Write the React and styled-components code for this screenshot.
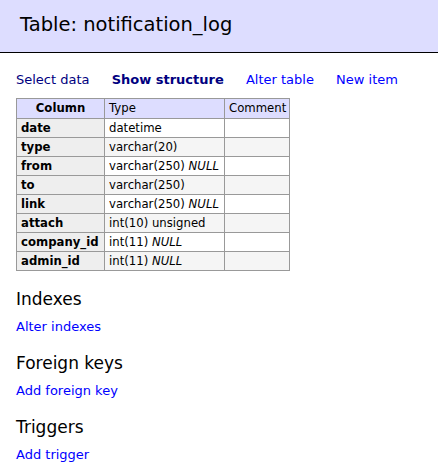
import React from "react";
import styled, { createGlobalStyle } from "styled-components";

const GlobalStyle = createGlobalStyle`
  html, body {
    margin: 0;
    padding: 0;
    background: #fff;
  }
  body {
    font-family: "DejaVu Sans", Verdana, sans-serif;
    font-size: 13px;
    line-height: 16px;
    color: #000;
  }
`;

const Page = styled.div`
  min-height: 473px;
`;

const Title = styled.h2`
  margin: 0;
  padding: 13px 20px 15px;
  font-size: 19.5px;
  line-height: 24px;
  font-weight: normal;
  color: #000;
  background: #ddf;
  border-bottom: 1px solid #000;
`;

const Content = styled.div`
  padding: 0 16px 10px;
`;

const Links = styled.p`
  margin: 19px 0 0;
  white-space: nowrap;
`;

const Link = styled.a`
  color: ${(p) => (p.$visited ? "#000080" : "#0000ff")};
  font-weight: ${(p) => (p.$active ? "bold" : "normal")};
  text-decoration: none;
  margin-right: ${(p) => (p.$inline ? "18px" : "0")};
  cursor: pointer;
`;

const Table = styled.table`
  margin: 10px 0 1px;
  border-collapse: collapse;
  table-layout: fixed;
  width: 274px;
  font-size: 11.7px;
  line-height: 14px;
`;

const Col = styled.col`
  width: ${(p) => p.$w}px;
`;

const HeadTh = styled.th`
  border: 1px solid #999;
  padding: 2px 6px;
  line-height: 15px;
  background: #ddf;
  text-align: center;
  font-weight: bold;
`;

const HeadTd = styled.td`
  border: 1px solid #999;
  padding: 2px 4px;
  line-height: 15px;
  background: #ddf;
  text-align: left;
  white-space: nowrap;
  overflow: hidden;
`;

const RowTh = styled.th`
  border: 1px solid #999;
  padding: 2px 4px;
  background: #eee;
  text-align: left;
  font-weight: bold;
  white-space: nowrap;
`;

const Cell = styled.td`
  border: 1px solid #999;
  padding: 2px 4px;
  background: ${(p) => (p.$odd ? "#f5f5f5" : "#fff")};
  white-space: nowrap;
`;

const Null = styled.i`
  font-style: italic;
`;

const SectionTitle = styled.h3`
  margin: 18px 0 0;
  font-size: 17px;
  line-height: 20px;
  font-weight: normal;
`;

const SectionLinks = styled.p`
  margin: 10px 0 0;
`;

const columns = [
  { name: "date", type: "datetime" },
  { name: "type", type: "varchar(20)" },
  { name: "from", type: "varchar(250)", nullable: true },
  { name: "to", type: "varchar(250)" },
  { name: "link", type: "varchar(250)", nullable: true },
  { name: "attach", type: "int(10) unsigned" },
  { name: "company_id", type: "int(11)", nullable: true },
  { name: "admin_id", type: "int(11)", nullable: true },
];

const sections = [
  { title: "Indexes", link: "Alter indexes" },
  { title: "Foreign keys", link: "Add foreign key" },
  { title: "Triggers", link: "Add trigger" },
];

export default function App() {
  return (
    <Page>
      <GlobalStyle />
      <Title>Table: notification_log</Title>
      <Content>
        <Links>
          <Link $visited $inline>Select data</Link>{" "}
          <Link $visited $active $inline>Show structure</Link>{" "}
          <Link $inline>Alter table</Link>{" "}
          <Link $inline>New item</Link>
        </Links>
        <Table>
          <colgroup>
            <Col $w={88} />
            <Col $w={120} />
            <Col $w={65} />
          </colgroup>
          <thead>
            <tr>
              <HeadTh>Column</HeadTh>
              <HeadTd>Type</HeadTd>
              <HeadTd>Comment</HeadTd>
            </tr>
          </thead>
          <tbody>
            {columns.map((c, i) => (
              <tr key={c.name}>
                <RowTh>{c.name}</RowTh>
                <Cell $odd={i % 2 === 1}>
                  {c.type}
                  {c.nullable && (
                    <>
                      {" "}
                      <Null>NULL</Null>
                    </>
                  )}
                </Cell>
                <Cell $odd={i % 2 === 1}>&nbsp;</Cell>
              </tr>
            ))}
          </tbody>
        </Table>
        {sections.map((s) => (
          <React.Fragment key={s.title}>
            <SectionTitle>{s.title}</SectionTitle>
            <SectionLinks>
              <Link>{s.link}</Link>
            </SectionLinks>
          </React.Fragment>
        ))}
      </Content>
    </Page>
  );
}
